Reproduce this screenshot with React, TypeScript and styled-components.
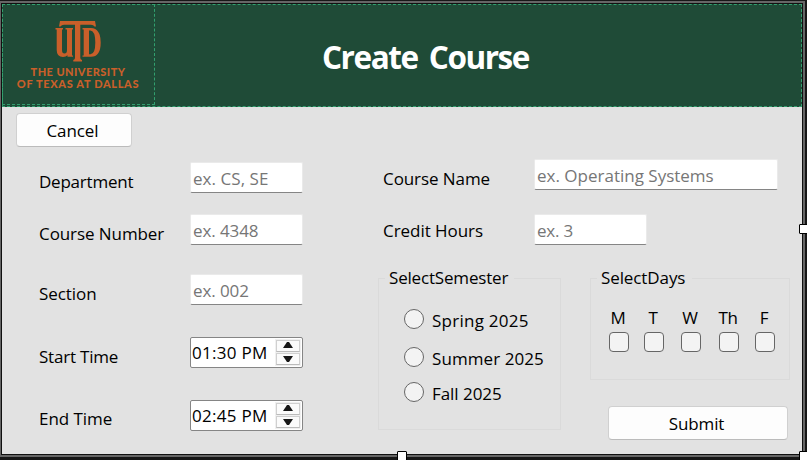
import React from "react";
import styled, { createGlobalStyle } from "styled-components";

const Global = createGlobalStyle`
  *{box-sizing:border-box}
  body{margin:0;overflow:hidden;background:#171717;font-family:"Open Sans","Noto Sans",sans-serif;font-size:17px;color:#000}
`;

const Desktop = styled.div`
  position: relative;
  width: 807px;
  height: 460px;
  padding-top: 1px;
  background: #171717;
`;

const Frame = styled.div`
  width: 805px;
  height: 456px;
  border: 2px solid #666;
  border-left: 1px solid #666;
`;

const Form = styled.div`
  display: flex;
  flex-direction: column;
  width: 802px;
  height: 452px;
  border: 1px solid #101010;
  background: #e2e2e2;
`;

const Header = styled.header`
  display: flex;
  flex: none;
  height: 103px;
  border: 1px dashed #32a06f;
  background: #1f4b37;
`;

const Brand = styled.div`
  width: 153px;
  margin-top: -1px;
  margin-left: -1px;
  height: 101px;
  border: 1px dashed #32a06f;
  padding-top: 15px;
  text-align: center;
  color: #c95f2a;
  svg { display: block; margin: 0 0 3px 52px; }
`;

const BrandLine = styled.div<{ $spacing: number }>`
  height: 12px;
  margin-left: -1px;
  font: 900 11px/12px Lato, sans-serif;
  letter-spacing: ${(p) => p.$spacing}px;
  white-space: nowrap;
`;

const Title = styled.h1`
  flex: 1;
  margin: 0;
  padding-left: 167px;
  font: 700 31.5px/104px "Open Sans", sans-serif;
  letter-spacing: -1.45px;
  word-spacing: 4.5px;
  color: #fff;
  white-space: nowrap;
`;

const Button = styled.button<{ $w: number }>`
  display: block;
  width: ${(p) => p.$w}px;
  height: 34px;
  padding: 0 3px 0 0;
  border: 1px solid #d0d0d0;
  border-bottom-color: #bbb;
  border-radius: 4px;
  background: #fdfdfd;
  color: #000;
  font: inherit;
  letter-spacing: -0.1px;
`;

const Toolbar = styled.div`
  height: 40px;
  padding: 6px 0 0 14px;
`;

const Columns = styled.div`
  display: flex;
`;

const Left = styled.div`
  width: 376px;
  padding-left: 37px;
`;

const Right = styled.div`
  flex: 1;
`;

const Row = styled.div<{ $h: number; $top?: number; $indent?: number }>`
  display: grid;
  grid-template-columns: 151px auto;
  justify-content: start;
  align-items: start;
  height: ${(p) => p.$h}px;
  padding-top: ${(p) => p.$top ?? 0}px;
  padding-left: ${(p) => p.$indent ?? 0}px;
`;

const Text = styled.span<{ $ls?: number; $top?: number }>`
  display: block;
  padding-top: ${(p) => p.$top ?? 0}px;
  line-height: 24px;
  letter-spacing: ${(p) => p.$ls ?? -0.4}px;
  white-space: nowrap;
`;

const Input = styled.input<{ $w: number; $ls: number }>`
  display: block;
  width: ${(p) => p.$w}px;
  height: 31px;
  padding: 1px 0 0 2px;
  border: 1px solid #eaeaea;
  border-bottom-color: #858585;
  border-radius: 2px;
  outline: none;
  background: #fff;
  font: inherit;
  letter-spacing: ${(p) => p.$ls}px;
  &::placeholder { color: #767676; opacity: 1; }
`;

const TimeBox = styled.div`
  display: flex;
  justify-content: space-between;
  width: 113px;
  height: 31px;
  padding: 1px;
  border: 1px solid #858585;
  border-radius: 2px;
  background: #fff;
`;

const Arrows = styled.div`
  display: grid;
  grid-template-rows: 13px 13px;
  width: 26px;
  height: 27px;
  padding: 1px;
  background: #f0f0f0;
`;

const Arrow = styled.button<{ $drop: number }>`
  display: flex;
  align-items: flex-start;
  width: 24px;
  height: 12px;
  padding: ${(p) => p.$drop}px 0 0 6px;
  border: 1px solid #d0d0d0;
  border-bottom-color: #bbb;
  background: #fbfbfb;
`;

const Groups = styled.div`
  display: flex;
  align-items: flex-start;
  gap: 29px;
`;

const Group = styled.fieldset<{ $w: number; $h: number }>`
  width: ${(p) => p.$w}px;
  min-width: 0;
  height: ${(p) => p.$h}px;
  margin: 0;
  padding: 0;
  border: 1px solid #dadada;
`;

const Legend = styled.legend<{ $w: number; $ls: number }>`
  width: ${(p) => p.$w}px;
  height: 24px;
  margin-left: 6px;
  padding: 0 0 0 4px;
  line-height: 24px;
  letter-spacing: ${(p) => p.$ls}px;
  white-space: nowrap;
`;

const Options = styled.div`
  padding: 19px 0 0 25px;
`;

const Option = styled.label<{ $h: number }>`
  display: flex;
  gap: 8px;
  height: ${(p) => p.$h}px;
`;

const Radio = styled.input.attrs({ type: "radio", name: "semester" })`
  appearance: none;
  flex: none;
  width: 20px;
  height: 20px;
  margin: 0;
  border: 1px solid #666;
  border-radius: 50%;
  background: #f3f3f3;
`;

const Check = styled.input.attrs({ type: "checkbox" })`
  appearance: none;
  display: block;
  width: 20px;
  height: 20px;
  margin: 2px 0 0;
  border: 1px solid #666;
  border-radius: 4px;
  background: #f3f3f3;
`;

const Days = styled.div`
  display: grid;
  grid-template-columns: 35px 37px 38px 36px 20px;
  padding: 16px 0 0 18px;
`;

const Day = styled.label`
  display: flex;
  flex-direction: column;
  align-items: center;
  width: 20px;
  span { margin-left: -2px; }
`;

const Side = styled.div`
  display: flex;
  flex-direction: column;
  gap: 26px;
`;

const SubmitSlot = styled.div`
  padding-left: 18px;
`;

const Handle = styled.i<{ $x: number; $y: number }>`
  position: absolute;
  left: ${(p) => p.$x}px;
  top: ${(p) => p.$y}px;
  width: 10px;
  height: 10px;
  border: 1px solid #000;
  border-radius: 1px;
  background: #fff;
`;

function Time({ value }: { value: string }) {
  return (
    <TimeBox>
      <Text $top={2} $ls={0.3}>{value}</Text>
      <Arrows>
        <Arrow $drop={1}><svg width="10" height="6"><path d="M0 6L4 0H6L10 6Z" fill="#171717" /></svg></Arrow>
        <Arrow $drop={2}><svg width="10" height="6"><path d="M0 0H10L6 6H4Z" fill="#171717" /></svg></Arrow>
      </Arrows>
    </TimeBox>
  );
}

function Logo() {
  return (
    <svg width="47" height="43" viewBox="0 0 47 43" fill="#c95f2a">
      <path d="M5 1H40L41 6.5H39.5Q38.5 4.8 36 4.8H25.3V38Q25.3 39.5 27 40V41.5H18.3V40Q20 39.5 20 38V4.8H9Q6.500 4.8 5.500 6.500H4Z" />
      <path d="M.5 8H8V9.500H7V30Q7 33.500 9.500 33.500Q12 33.500 12 30V9.500H10.500V8H18V9.500H17V35.500H18V36.800H12.500V35.300Q11 37 8 37Q1.700 37 1.700 30V9.500H.5Z" />
      <path fillRule="evenodd" d="M27.500 8H36Q45.700 8.500 45.700 22.500Q45.700 36.800 36 36.800H27.500V35.500H28.700V9.500H27.500ZM34 10.500V34.300H35.500Q40.300 34 40.300 22.500Q40.300 11 35.500 10.500Z" />
    </svg>
  );
}

export default function App() {
  return (
    <>
      <Global />
      <Desktop>
        <Frame>
          <Form>
            <Header>
              <Brand>
                <Logo />
                <BrandLine $spacing={0.45}>THE UNIVERSITY</BrandLine>
                <BrandLine $spacing={0.65}>OF TEXAS AT DALLAS</BrandLine>
              </Brand>
              <Title>Create Course</Title>
            </Header>
            <Toolbar><Button $w={116}>Cancel</Button></Toolbar>
            <Columns>
              <Left>
                <Row $h={67} $top={15}><Text $top={8} $ls={-0.22}>Department</Text><Input $w={113} $ls={0.05} placeholder="ex. CS, SE" /></Row>
                <Row $h={60}><Text $top={8} $ls={-0.08}>Course Number</Text><Input $w={113} $ls={-0.1} placeholder="ex. 4348" /></Row>
                <Row $h={63}><Text $top={8} $ls={-0.05}>Section</Text><Input $w={113} $ls={-0.1} placeholder="ex. 002" /></Row>
                <Row $h={63}><Text $top={8} $ls={-0.2}>Start Time</Text><Time value="01:30 PM" /></Row>
                <Row $h={31}><Text $top={7} $ls={-0.05}>End Time</Text><Time value="02:45 PM" /></Row>
              </Left>
              <Right>
                <Row $h={67} $top={12} $indent={5}><Text $top={8} $ls={-0.08}>Course Name</Text><Input $w={244} $ls={0} placeholder="ex. Operating Systems" /></Row>
                <Row $h={52} $indent={5}><Text $top={5} $ls={-0.05}>Credit Hours</Text><Input $w={113} $ls={-0.2} placeholder="ex. 3" /></Row>
                <Groups>
                  <Group $w={183} $h={164}>
                    <Legend $w={129} $ls={-0.18}>SelectSemester</Legend>
                    <Options>
                      <Option $h={38}><Radio /><Text $ls={0.25}>Spring 2025</Text></Option>
                      <Option $h={35}><Radio /><Text $ls={0.08}>Summer 2025</Text></Option>
                      <Option $h={20}><Radio /><Text $ls={-0.05}>Fall 2025</Text></Option>
                    </Options>
                  </Group>
                  <Side>
                    <Group $w={200} $h={114}>
                      <Legend $w={95} $ls={-0.1}>SelectDays</Legend>
                      <Days>{["M", "T", "W", "Th", "F"].map((d) => <Day key={d}><Text>{d}</Text><Check /></Day>)}</Days>
                    </Group>
                    <SubmitSlot><Button $w={180}>Submit</Button></SubmitSlot>
                  </Side>
                </Groups>
              </Right>
            </Columns>
          </Form>
        </Frame>
        <Handle $x={799} $y={224} />
        <Handle $x={397} $y={451} />
        <Handle $x={799} $y={451} />
      </Desktop>
    </>
  );
}
